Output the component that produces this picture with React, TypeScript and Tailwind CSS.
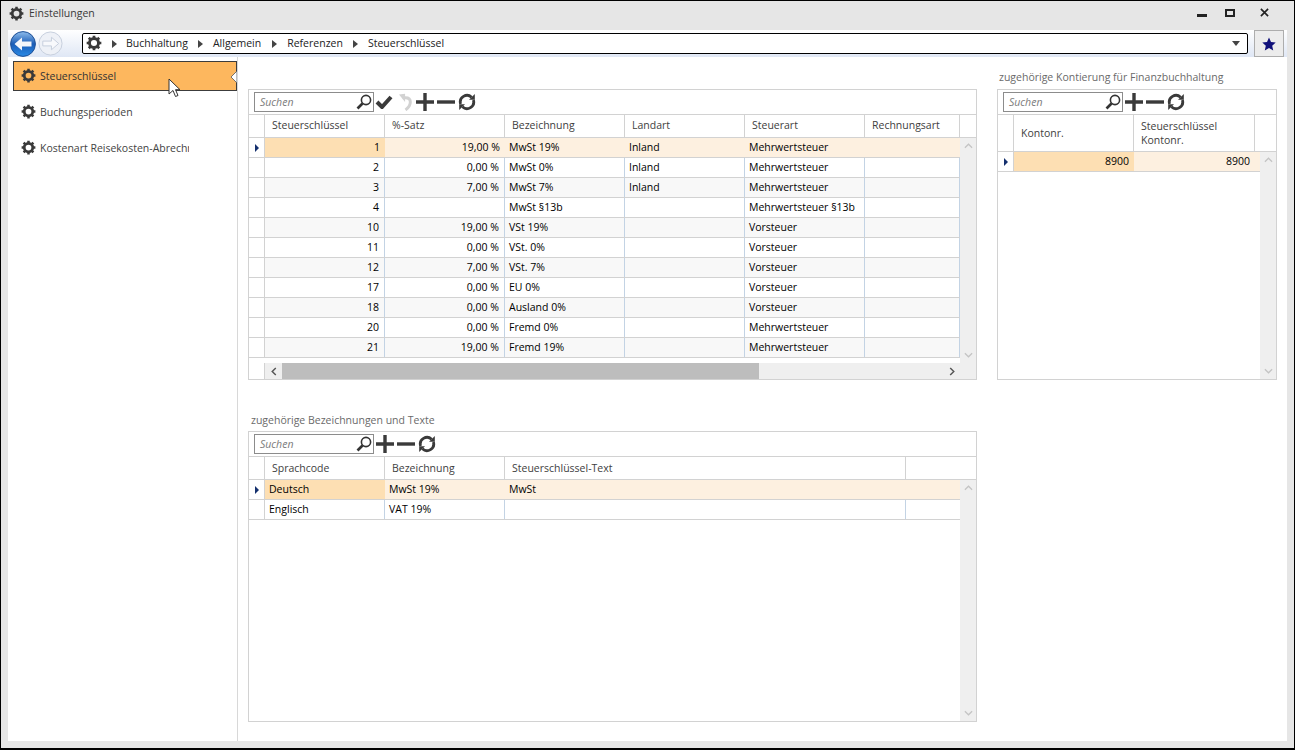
import React from "react";

const Gear = ({ c = "w-[15px] h-[15px]" }: { c?: string }) => (
  <svg viewBox="0 0 24 24" className={c}>
    <circle cx="12" cy="12" r="6.8" fill="none" stroke="#3a3a3a" strokeWidth="4.4" />
    <path
      d="M12 1v4M12 19v4M1 12h4M19 12h4M4.2 4.2l2.9 2.9M16.9 16.9l2.9 2.9M19.8 4.2l-2.9 2.9M7.1 16.9l-2.9 2.9"
      stroke="#3a3a3a"
      strokeWidth="4"
    />
  </svg>
);

const Tri = () => (
  <svg viewBox="0 0 5 8" className="w-[5px] h-[8px]">
    <path d="M0 0l5 4-5 4z" fill="#444" />
  </svg>
);

const Plus = () => (
  <svg viewBox="0 0 18 18" className="w-[18px] h-[18px]">
    <path d="M0 9h18M9 0v18" stroke="#3a3a3a" strokeWidth="3.4" />
  </svg>
);
const Minus = () => (
  <svg viewBox="0 0 18 18" className="w-[18px] h-[18px]">
    <path d="M0 9h18" stroke="#3a3a3a" strokeWidth="3.4" />
  </svg>
);
const Check = () => (
  <svg viewBox="0 0 18 14" className="w-[18px] h-[14px]">
    <path d="M2 7l5 5 9-10" fill="none" stroke="#3a3a3a" strokeWidth="4" />
  </svg>
);
const Undo = () => (
  <svg viewBox="0 0 14 18" className="w-[13px] h-[18px]">
    <path d="M4 4.5h3c3.5 0 5.2 1.6 5.2 4.6 0 3.4-2 6.2-5.2 8.4" fill="none" stroke="#d2d2d2" strokeWidth="3.2" />
    <path d="M0 1l6.5-1v9z" fill="#d2d2d2" />
  </svg>
);
const Refresh = () => (
  <svg viewBox="0 0 18 18" className="w-[18px] h-[18px]">
    <path d="M2.6 11A6.7 6.7 0 0 1 13.6 4.2" fill="none" stroke="#3a3a3a" strokeWidth="2.8" />
    <path d="M15.4 7A6.7 6.7 0 0 1 4.4 13.8" fill="none" stroke="#3a3a3a" strokeWidth="2.8" />
    <path d="M16.8 1v5.8H11z" fill="#3a3a3a" />
    <path d="M1.2 17v-5.8H7z" fill="#3a3a3a" />
  </svg>
);
const Lens = () => (
  <svg viewBox="0 0 16 16" className="w-[16px] h-[16px]">
    <circle cx="10" cy="6" r="4.6" fill="none" stroke="#333" strokeWidth="1.6" />
    <path d="M6.5 9.5L1.5 14.5" stroke="#333" strokeWidth="2.6" />
  </svg>
);
const Up = () => (
  <svg viewBox="0 0 10 6" className="w-[9px] h-[6px]">
    <path d="M1 5l4-4 4 4" fill="none" stroke="#c4c4c4" strokeWidth="1.4" />
  </svg>
);
const Down = () => (
  <svg viewBox="0 0 10 6" className="w-[9px] h-[6px]">
    <path d="M1 1l4 4 4-4" fill="none" stroke="#c4c4c4" strokeWidth="1.4" />
  </svg>
);
const Left = () => (
  <svg viewBox="0 0 6 10" className="w-[6px] h-[9px]">
    <path d="M5 1L1 5l4 4" fill="none" stroke="#555" strokeWidth="1.6" />
  </svg>
);
const Right = () => (
  <svg viewBox="0 0 6 10" className="w-[6px] h-[9px]">
    <path d="M1 1l4 4-4 4" fill="none" stroke="#555" strokeWidth="1.6" />
  </svg>
);
const RowMark = () => (
  <svg viewBox="0 0 4 8" className="w-[4px] h-[8px]">
    <path d="M0 0l4 4-4 4z" fill="#14306e" />
  </svg>
);

const Toolbar = ({ extra = false }: { extra?: boolean }) => (
  <div className="h-[25px] shrink-0 flex items-center pl-[5px] border-b border-[#d2d2d2]">
    <div className="w-[120px] h-[20px] border border-[#8c8c8c] flex items-center justify-between pl-[5px] pr-[1px] italic text-[#7b7b7b]">
      <span className="pt-[1px]">Suchen</span>
      <Lens />
    </div>
    {extra && (
      <div className="flex items-center ml-[1px] mr-[2px] gap-[6px]">
        <Check />
        <Undo />
      </div>
    )}
    <div className="flex items-center ml-[2px] gap-[3px]">
      <Plus />
      <Minus />
      <Refresh />
    </div>
  </div>
);

type Row = { cells: string[]; alt?: boolean; sel?: boolean };

const Cell = ({ w, right, text, bg, noBorder }: { w: string; right?: boolean; text: string; bg: string; noBorder?: boolean }) => (
  <div
    className={`${w} ${bg} h-full shrink-0 flex items-center px-[4px] text-black whitespace-nowrap overflow-hidden ${
      right ? "justify-end pr-[5px]" : ""
    } ${noBorder ? "" : "border-r border-[#c3d3e4]"}`}
  >
    {text}
  </div>
);

const Head = ({ widths, labels, h, up }: { widths: string[]; labels: string[]; h: string; up?: boolean }) => (
  <div className={`${h} shrink-0 flex border-b border-[#d2d2d2] text-[#3e3e3e]`}>
    <div className="w-[16px] shrink-0 border-r border-[#d2d2d2]" />
    {labels.map((l, i) => (
      <div
        key={i}
        className={`${widths[i]} shrink-0 flex items-center pl-[7px] leading-[14px] border-r border-[#d2d2d2] whitespace-pre-line ${up ? "pb-[2px]" : ""}`}
      >
        {l}
      </div>
    ))}
  </div>
);

const RowView = ({ row, widths, rights, hasLastBlank }: { row: Row; widths: string[]; rights: boolean[]; hasLastBlank?: boolean }) => (
  <div className="h-[20px] shrink-0 flex border-b border-[#d2d2d2]">
    <div className="w-[16px] shrink-0 border-r border-[#d2d2d2] flex items-center justify-center">
      {row.sel && <RowMark />}
    </div>
    {row.cells.map((t, i) => (
      <Cell
        key={i}
        w={widths[i]}
        right={rights[i]}
        text={t}
        noBorder={row.sel}
        bg={row.sel ? (i === 0 ? "bg-[#fddfb3]" : "bg-[#fdf0e0]") : row.alt ? "bg-[#f8f8f8]" : "bg-white"}
      />
    ))}
    {hasLastBlank && <div className={`flex-1 ${row.sel ? "bg-[#fdf0e0]" : row.alt ? "bg-[#f8f8f8]" : "bg-white"}`} />}
  </div>
);

const VBar = () => (
  <div className="w-[16px] shrink-0 bg-[#efefef] flex flex-col items-center justify-between py-[5px]">
    <Up />
    <Down />
  </div>
);

const mainW = ["w-[120px]", "w-[120px]", "w-[120px]", "w-[120px]", "w-[120px]", "w-[95px]"];
const mainH = ["Steuerschlüssel", "%-Satz", "Bezeichnung", "Landart", "Steuerart", "Rechnungsart"];
const mainRows: Row[] = [
  ["1", "19,00 %", "MwSt 19%", "Inland", "Mehrwertsteuer", ""],
  ["2", "0,00 %", "MwSt 0%", "Inland", "Mehrwertsteuer", ""],
  ["3", "7,00 %", "MwSt 7%", "Inland", "Mehrwertsteuer", ""],
  ["4", "", "MwSt §13b", "", "Mehrwertsteuer §13b", ""],
  ["10", "19,00 %", "VSt 19%", "", "Vorsteuer", ""],
  ["11", "0,00 %", "VSt. 0%", "", "Vorsteuer", ""],
  ["12", "7,00 %", "VSt. 7%", "", "Vorsteuer", ""],
  ["17", "0,00 %", "EU 0%", "", "Vorsteuer", ""],
  ["18", "0,00 %", "Ausland 0%", "", "Vorsteuer", ""],
  ["20", "0,00 %", "Fremd 0%", "", "Mehrwertsteuer", ""],
  ["21", "19,00 %", "Fremd 19%", "", "Mehrwertsteuer", ""],
].map((cells, i) => ({ cells, sel: i === 0, alt: i % 2 === 0 }));

const NavItem = ({ label, active }: { label: string; active?: boolean }) => (
  <div
    className={`relative h-[30px] flex items-center gap-[4px] ${
      active ? "pl-[7px] bg-[#fdb75e] border border-[#3c3c3c] text-[#333]" : "pl-[8px] text-[#444]"
    }`}
  >
    <span className="-mt-[1px]">
      <Gear />
    </span>
    <span className="w-[149px] pt-[1px] overflow-hidden whitespace-nowrap">{label}</span>
    {active && (
      <svg viewBox="0 0 6 12" className="absolute right-[-1px] top-[9px] w-[6px] h-[12px]">
        <path d="M6 0L0 6l6 6z" fill="#fff" stroke="#555" strokeWidth=".8" />
      </svg>
    )}
    {active && (
      <svg viewBox="0 0 12 20" className="absolute left-[154px] top-[16px] w-[12px] h-[20px]">
        <path d="M1 1v15l4-3.5 2.5 6 2.5-1-2.5-5.8H12z" fill="#fff" stroke="#333" strokeWidth="1" />
      </svg>
    )}
  </div>
);

export default function App() {
  return (
    <div
      className="w-[1295px] h-[750px] bg-[#e6e6e6] border border-black border-b-2 flex flex-col overflow-hidden text-[10.5px]"
      style={{ fontFamily: '"Open Sans", "Noto Sans", sans-serif' }}
    >
      {/* Title bar */}
      <div className="h-[29px] shrink-0 flex items-center pl-[8px] pb-[4px] text-[#333]">
        <Gear />
        <span className="ml-[5px] text-[#3a3a3a]">Einstellungen</span>
        <div className="ml-auto flex items-center pb-[2px]">
          <div className="w-[10px] h-[3px] bg-[#222] mt-[5px] mr-[18px]" />
          <div className="w-[10px] h-[8px] border-2 border-[#222] mr-[25px]" />
          <svg viewBox="0 0 10 10" className="w-[9px] h-[9px] mr-[25px]">
            <path d="M1 1l8 8M9 1l-8 8" stroke="#222" strokeWidth="1.8" />
          </svg>
        </div>
      </div>

      {/* Client area */}
      <div className="flex-1 mx-[7px] mb-[7px] bg-white flex flex-col min-h-0">
        {/* Nav bar */}
        <div className="h-[27px] shrink-0 flex items-center bg-gradient-to-b from-white to-[#dfe7f5]">
          <div className="w-[74px] pl-[2px] flex items-center shrink-0">
            <svg viewBox="0 0 26 26" className="w-[26px] h-[26px]">
              <defs>
                <linearGradient id="bb" x1="0" y1="0" x2="0" y2="1">
                  <stop offset="0" stopColor="#8fbdec" />
                  <stop offset=".5" stopColor="#1a5cb6" />
                  <stop offset="1" stopColor="#2a8ae6" />
                </linearGradient>
              </defs>
              <circle cx="13" cy="13" r="12.4" fill="url(#bb)" stroke="#1d4f96" />
              <path d="M4.5 13l7.5-6.5v4h9.5v5H12v4z" fill="#f4f6fa" />
            </svg>
            <svg viewBox="0 0 26 26" className="w-[25px] h-[25px] ml-[2px]">
              <circle cx="13" cy="13" r="12" fill="#eef1f7" stroke="#c6cedd" />
              <path d="M21.5 13L14 6.5v4H5v5h9v4z" fill="#f8f9fc" stroke="#c6cedd" />
            </svg>
          </div>
          <div className="w-[1166px] h-[21px] shrink-0 rounded-[2px] border border-black bg-white flex items-center pl-[3px] pr-[7px] text-[#222]">
            <span className="-mt-[1px]">
              <Gear c="w-[16px] h-[16px]" />
            </span>
            <span className="ml-[10px] mr-[9px]"><Tri /></span>
            <span>Buchhaltung</span>
            <span className="mx-[10px]"><Tri /></span>
            <span>Allgemein</span>
            <span className="ml-[11px] mr-[10px]"><Tri /></span>
            <span>Referenzen</span>
            <span className="mx-[10px]"><Tri /></span>
            <span>Steuerschlüssel</span>
            <svg viewBox="0 0 8 5" className="ml-auto w-[8px] h-[5px]">
              <path d="M0 0h8L4 5z" fill="#444" />
            </svg>
          </div>
          <div className="ml-[6px] w-[30px] h-[27px] shrink-0 bg-[#ececec] border border-[#adadad] flex items-center justify-center">
            <svg viewBox="0 0 14 14" className="w-[14px] h-[14px]">
              <path d="M7 .6l2 4.4 4.7.5-3.5 3.2 1 4.7L7 11l-4.2 2.4 1-4.7L.3 5.5 5 5z" fill="#10107a" />
            </svg>
          </div>
        </div>

        {/* Body */}
        <div className="flex-1 flex min-h-0">
          {/* Sidebar */}
          <div className="w-[230px] shrink-0 border-r border-[#d8d8d8] pl-[5px] pt-[4px] flex flex-col gap-[6px]">
            <NavItem label="Steuerschlüssel" active />
            <NavItem label="Buchungsperioden" />
            <NavItem label="Kostenart Reisekosten-Abrechnung" />
          </div>

          {/* Content */}
          <div className="flex-1 flex pl-[10px] min-w-0">
            <div className="w-[729px] shrink-0 pt-[32px] flex flex-col">
              {/* Main grid */}
              <div className="h-[291px] shrink-0 border border-[#d2d2d2] flex flex-col">
                <Toolbar extra />
                <Head widths={mainW} labels={mainH} h="h-[23px]" up />
                <div className="flex flex-1 min-h-0">
                  <div className="w-[711px] shrink-0 flex flex-col">
                    {mainRows.map((r, i) => (
                      <RowView key={i} row={r} widths={mainW} rights={[true, true]} />
                    ))}
                  </div>
                  <VBar />
                </div>
                <div className="h-[16px] shrink-0 flex">
                  <div className="w-[16px] shrink-0 border-r border-[#d2d2d2]" />
                  <div className="flex-1 flex bg-[#efefef]">
                    <div className="w-[17px] shrink-0 flex items-center justify-center"><Left /></div>
                    <div className="w-[477px] shrink-0 bg-[#bdbdbd]" />
                    <div className="flex-1 flex items-center justify-end pr-[21px]"><Right /></div>
                  </div>
                </div>
              </div>

              {/* Bottom grid */}
              <div className="mt-[32px] h-[18px] mb-[1px] flex items-center pl-[3px] text-[#6a6a6a]">zugehörige Bezeichnungen und Texte</div>
              <div className="h-[291px] shrink-0 border border-[#d2d2d2] flex flex-col">
                <Toolbar />
                <Head
                  widths={["w-[120px]", "w-[120px]", "w-[401px]"]}
                  labels={["Sprachcode", "Bezeichnung", "Steuerschlüssel-Text"]}
                  h="h-[23px]"
                />
                <div className="flex flex-1 min-h-0">
                  <div className="w-[711px] shrink-0 flex flex-col">
                    <RowView
                      row={{ cells: ["Deutsch", "MwSt 19%", "MwSt"], sel: true }}
                      widths={["w-[120px]", "w-[120px]", "w-[401px]"]}
                      rights={[]}
                      hasLastBlank
                    />
                    <RowView
                      row={{ cells: ["Englisch", "VAT 19%", ""] }}
                      widths={["w-[120px]", "w-[120px]", "w-[401px]"]}
                      rights={[]}
                      hasLastBlank
                    />
                  </div>
                  <VBar />
                </div>
              </div>
            </div>

            {/* Right column */}
            <div className="w-[280px] shrink-0 ml-[20px] pt-[12px] flex flex-col">
              <div className="h-[20px] pb-[2px] flex items-center pl-[2px] text-[#6a6a6a] whitespace-nowrap">zugehörige Kontierung für Finanzbuchhaltung</div>
              <div className="h-[291px] shrink-0 border border-[#d2d2d2] flex flex-col">
                <Toolbar />
                <Head
                  widths={["w-[120px]", "w-[121px]"]}
                  labels={["Kontonr.", "Steuerschlüssel\nKontonr."]}
                  h="h-[37px]"
                />
                <div className="flex flex-1 min-h-0">
                  <div className="flex-1 flex flex-col min-w-0">
                    <RowView
                      row={{ cells: ["8900", "8900"], sel: true }}
                      widths={["w-[120px]", "w-[121px]"]}
                      rights={[true, true]}
                      hasLastBlank
                    />
                  </div>
                  <VBar />
                </div>
              </div>
            </div>
          </div>
        </div>
      </div>
    </div>
  );
}
